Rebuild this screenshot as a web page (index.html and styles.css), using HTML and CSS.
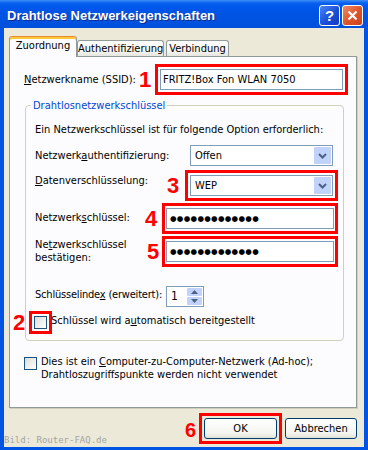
FILE: index.html
```html
<!DOCTYPE html>
<html lang="de">

<head>
  <meta charset="UTF-8" />
  <meta name="viewport" content="width=device-width, initial-scale=1.0" />
  <title>Drahtlose Netzwerkeigenschaften</title>
  <link rel="stylesheet" href="styles.css">
</head>

<body>
  <div class="window">
    <div class="titlebar">
      <span class="title">Drahtlose Netzwerkeigenschaften</span>
      <div class="caption-buttons">
        <span class="cap-btn help">?</span>
        <span class="cap-btn close">
          <svg width="13" height="13" viewBox="0 0 13 13">
            <path d="M2.5 2.5 L10.5 10.5 M10.5 2.5 L2.5 10.5" stroke="#fff" stroke-width="2.2" />
          </svg>
        </span>
      </div>
    </div>

    <div class="client">
      <div class="tabs">
        <span class="tab active">Zuordnung</span>
        <span class="tab auth">Authentifizierung</span>
        <span class="tab conn">Verbindung</span>
      </div>

      <div class="panel">
        <div class="row ssid-row">
          <span class="label ssid-label"><u>N</u>etzwerkname (SSID):</span>
          <span class="marker">1</span>
          <div class="mark-box ssid-box">
            <div class="textbox">FRITZ!Box Fon WLAN 7050</div>
          </div>
        </div>

        <fieldset class="group">
          <legend>Drahtlosnetzwerkschlüssel</legend>
          <p class="info">Ein Netzwerkschlüssel ist für folgende Option erforderlich:</p>

          <div class="row auth-row">
            <span class="label auth-label">Netzwerk<u>a</u>uthentifizierung:</span>
            <div class="combo">
              <span class="combo-text">Offen</span>
              <span class="drop-btn">
                <svg width="9" height="6" viewBox="0 0 9 6"><path d="M1 1 L4.5 4.5 L8 1" fill="none" stroke="#4d6185" stroke-width="2" /></svg>
              </span>
            </div>
          </div>

          <div class="row crypt-row">
            <span class="label crypt-label"><u>D</u>atenverschlüsselung:</span>
            <span class="marker">3</span>
            <div class="mark-box">
              <div class="combo">
                <span class="combo-text">WEP</span>
                <span class="drop-btn">
                  <svg width="9" height="6" viewBox="0 0 9 6"><path d="M1 1 L4.5 4.5 L8 1" fill="none" stroke="#4d6185" stroke-width="2" /></svg>
                </span>
              </div>
            </div>
          </div>

          <div class="row key-row">
            <span class="label key-label">Netzwerk<u>s</u>chlüssel:</span>
            <span class="marker">4</span>
            <div class="mark-box key-box">
              <div class="textbox dots">●●●●●●●●●●●●●</div>
            </div>
          </div>

          <div class="row confirm-row">
            <span class="label confirm-label">Ne<u>t</u>zwerkschlüssel<br>bestätigen:</span>
            <span class="marker">5</span>
            <div class="mark-box key-box">
              <div class="textbox dots">●●●●●●●●●●●●●</div>
            </div>
          </div>

          <div class="row index-row">
            <span class="label index-label">Schlüsselinde<u>x</u> (erweitert):</span>
            <div class="spinner">
              <span class="spin-text">1</span>
              <span class="spin-btns">
                <span class="spin-btn">
                  <svg width="7" height="4" viewBox="0 0 7 4"><path d="M0 4 L3.5 0 L7 4 Z" fill="#4d6185" /></svg>
                </span>
                <span class="spin-btn">
                  <svg width="7" height="4" viewBox="0 0 7 4"><path d="M0 0 L3.5 4 L7 0 Z" fill="#4d6185" /></svg>
                </span>
              </span>
            </div>
          </div>

          <div class="row auto-row">
            <span class="marker">2</span>
            <div class="mark-box check-box">
              <span class="checkbox"></span>
            </div>
            <span class="label auto-label">Schlüssel wird a<u>u</u>tomatisch bereitgestellt</span>
          </div>
        </fieldset>

        <div class="adhoc-row">
          <span class="checkbox"></span>
          <span class="adhoc-label">Dies ist ein <u>C</u>omputer-zu-Computer-Netzwerk (Ad-hoc);<br>Drahtloszugriffspunkte werden nicht verwendet</span>
        </div>
      </div>

      <div class="footer">
        <span class="credit">Bild: Router-FAQ.de</span>
        <span class="marker ok-marker">6</span>
        <div class="mark-box">
          <span class="button">OK</span>
        </div>
        <span class="button cancel">Abbrechen</span>
      </div>
    </div>
  </div>
</body>

</html>
```

FILE: styles.css
```css
* {
  box-sizing: border-box;
}

body {
  margin: 0;
  font-family: "DejaVu Sans Condensed", "Liberation Sans", sans-serif;
  font-size: 11px;
  line-height: 13px;
  color: #000;
}

.window {
  width: 368px;
  height: 450px;
  display: flex;
  flex-direction: column;
  background: #0054e3;
}

/* Title bar */
.titlebar {
  height: 28px;
  flex: none;
  display: flex;
  align-items: center;
  justify-content: space-between;
  padding: 3px 5px 0 7px;
  background: linear-gradient(#3d8ef7 0, #0b61ef 3px, #0058ee 6px, #0054e3 50%, #0050dc 100%);
}

.title {
  font-family: "Liberation Sans", sans-serif;
  font-weight: bold;
  font-size: 13px;
  color: #fff;
  text-shadow: 1px 1px 0 #0f2a8c;
}

.caption-buttons {
  display: flex;
  gap: 2px;
}

.cap-btn {
  width: 21px;
  height: 21px;
  border: 1px solid #fff;
  border-radius: 3px;
  display: flex;
  align-items: center;
  justify-content: center;
  color: #fff;
}

.help {
  background: linear-gradient(135deg, #4a86f3, #1a4fd6 55%, #103cc2);
  font-family: "Liberation Sans", sans-serif;
  font-weight: bold;
  font-size: 15px;
}

.close {
  background: linear-gradient(135deg, #f08a66, #df5329 55%, #c9411d);
}

/* Dialog body */
.client {
  flex: 1;
  margin: 0 4px 3px;
  padding: 8px 7px 0 5px;
  background: #ece9d8;
  display: flex;
  flex-direction: column;
}

.tabs {
  height: 20px;
  flex: none;
  display: flex;
  align-items: flex-end;
}

.tab {
  height: 16px;
  padding-top: 1px;
  border: 1px solid #919b9c;
  border-bottom: none;
  border-radius: 3px 3px 0 0;
  background: linear-gradient(#fff, #f4f4f0 70%, #e6e5df);
  text-align: center;
  white-space: nowrap;
}

.tab.active {
  width: 68px;
  height: 21px;
  padding-top: 2px;
  margin-bottom: -1px;
  position: relative;
  z-index: 1;
  background: #fcfcfe;
  border-top: 1px solid #e68b2c;
  box-shadow: inset 0 2px 0 #ffc73c;
}

.tab.auth {
  width: 87px;
}

.tab.conn {
  width: 63px;
  margin-left: 2px;
}

.panel {
  flex: 1;
  border: 1px solid #919b9c;
  background: #fcfcfe;
  box-shadow: 1px 1px 0 #d0cebf;
  padding: 7px 8px 0 14px;
}

.row {
  display: flex;
  align-items: flex-start;
}

.label {
  flex: none;
  white-space: nowrap;
}

.marker {
  flex: none;
  align-self: center;
  font-family: "Liberation Sans", sans-serif;
  font-weight: bold;
  font-size: 22px;
  line-height: 22px;
  color: #f00;
}

.mark-box {
  flex: none;
  border: 3px solid #f00;
  padding: 2px;
}

.textbox {
  height: 21px;
  border: 1px solid #7f9db9;
  background: #fff;
  padding: 0 2px;
  line-height: 19px;
  white-space: nowrap;
}

.dots {
  font-family: "DejaVu Sans", sans-serif;
  font-size: 7.5px;
  letter-spacing: 0.3px;
  padding-left: 3px;
}

/* SSID */
.ssid-label {
  width: 115px;
  align-self: center;
}

.ssid-row .marker {
  width: 16px;
}

.ssid-box {
  flex: 1;
}

/* Group box */
.group {
  margin: 4px 4px 0 1px;
  padding: 11px 8px 6px 9px;
  border: 1px solid #d0d0bf;
  border-radius: 4px;
  min-width: 0;
}

.group legend {
  color: #0046d5;
  padding: 0 2px;
  margin-left: -4px;
}

.info {
  margin: 0;
}

.combo {
  width: 143px;
  height: 21px;
  border: 1px solid #7f9db9;
  background: #fff;
  display: flex;
  align-items: center;
  justify-content: space-between;
  padding: 1px;
}

.combo-text {
  padding-left: 3px;
}

.drop-btn {
  width: 17px;
  height: 17px;
  background: #c1d3fb;
  border-radius: 1px;
  display: flex;
  align-items: center;
  justify-content: center;
}

.auth-row {
  margin-top: 9px;
}

.auth-label {
  width: 155px;
  margin-top: 4px;
}

.crypt-row {
  margin-top: 4px;
}

.crypt-label {
  width: 132px;
  margin-top: 4px;
}

.crypt-row .marker {
  width: 18px;
}

.key-row {
  margin-top: 2px;
}

.key-label {
  width: 110px;
  margin-top: 8px;
}

.key-row .marker {
  width: 17px;
}

.key-box {
  width: 176px;
  padding: 2px 1px;
}

.confirm-row {
  margin-top: 2px;
}

.confirm-label {
  width: 112px;
  margin-top: 2px;
}

.confirm-row .marker {
  width: 15px;
}

.index-row {
  margin-top: 19px;
}

.index-label {
  width: 131px;
  margin-top: 2px;
  letter-spacing: -0.2px;
}

.spinner {
  width: 38px;
  height: 21px;
  border: 1px solid #7f9db9;
  background: #fff;
  display: flex;
  justify-content: space-between;
  padding: 1px;
}

.spin-text {
  padding-left: 3px;
  line-height: 17px;
  font-size: 12px;
}

.spin-btns {
  width: 15px;
  display: flex;
  flex-direction: column;
  gap: 1px;
}

.spin-btn {
  flex: 1;
  background: #c1d3fb;
  border-radius: 1px;
  display: flex;
  align-items: center;
  justify-content: center;
}

.auto-row {
  margin: 4px 0 0 -22px;
}

.auto-row .marker {
  width: 16px;
}

.auto-label {
  margin: 3px 0 0 -1px;
}

.checkbox {
  display: block;
  width: 13px;
  height: 13px;
  border: 1px solid #1c5180;
  background: linear-gradient(135deg, #dcdcd7, #fff);
}

.check-box {
  padding: 2px;
}

/* Ad-hoc option */
.adhoc-row {
  display: flex;
  align-items: flex-start;
  margin-top: 14px;
}

.adhoc-row .checkbox {
  margin-top: 2px;
}

.adhoc-label {
  margin-left: 4px;
}

/* Buttons */
.footer {
  height: 39px;
  flex: none;
  display: flex;
  align-items: flex-start;
  padding-top: 5px;
}

.credit {
  flex: 1;
  align-self: flex-end;
  margin: 0 0 1px -5px;
  font-family: "DejaVu Sans Mono", monospace;
  font-size: 9px;
  line-height: 11px;
  color: #a3a3a3;
}

.ok-marker {
  font-size: 20px;
  margin-right: 3px;
}

.button {
  display: block;
  width: 73px;
  height: 21px;
  border: 1px solid #003c74;
  border-radius: 3px;
  background: linear-gradient(#fff, #f4f4f0 75%, #e3e1d6);
  text-align: center;
  line-height: 19px;
}

.cancel {
  width: 72px;
  margin: 5px 0 0 3px;
}
```
